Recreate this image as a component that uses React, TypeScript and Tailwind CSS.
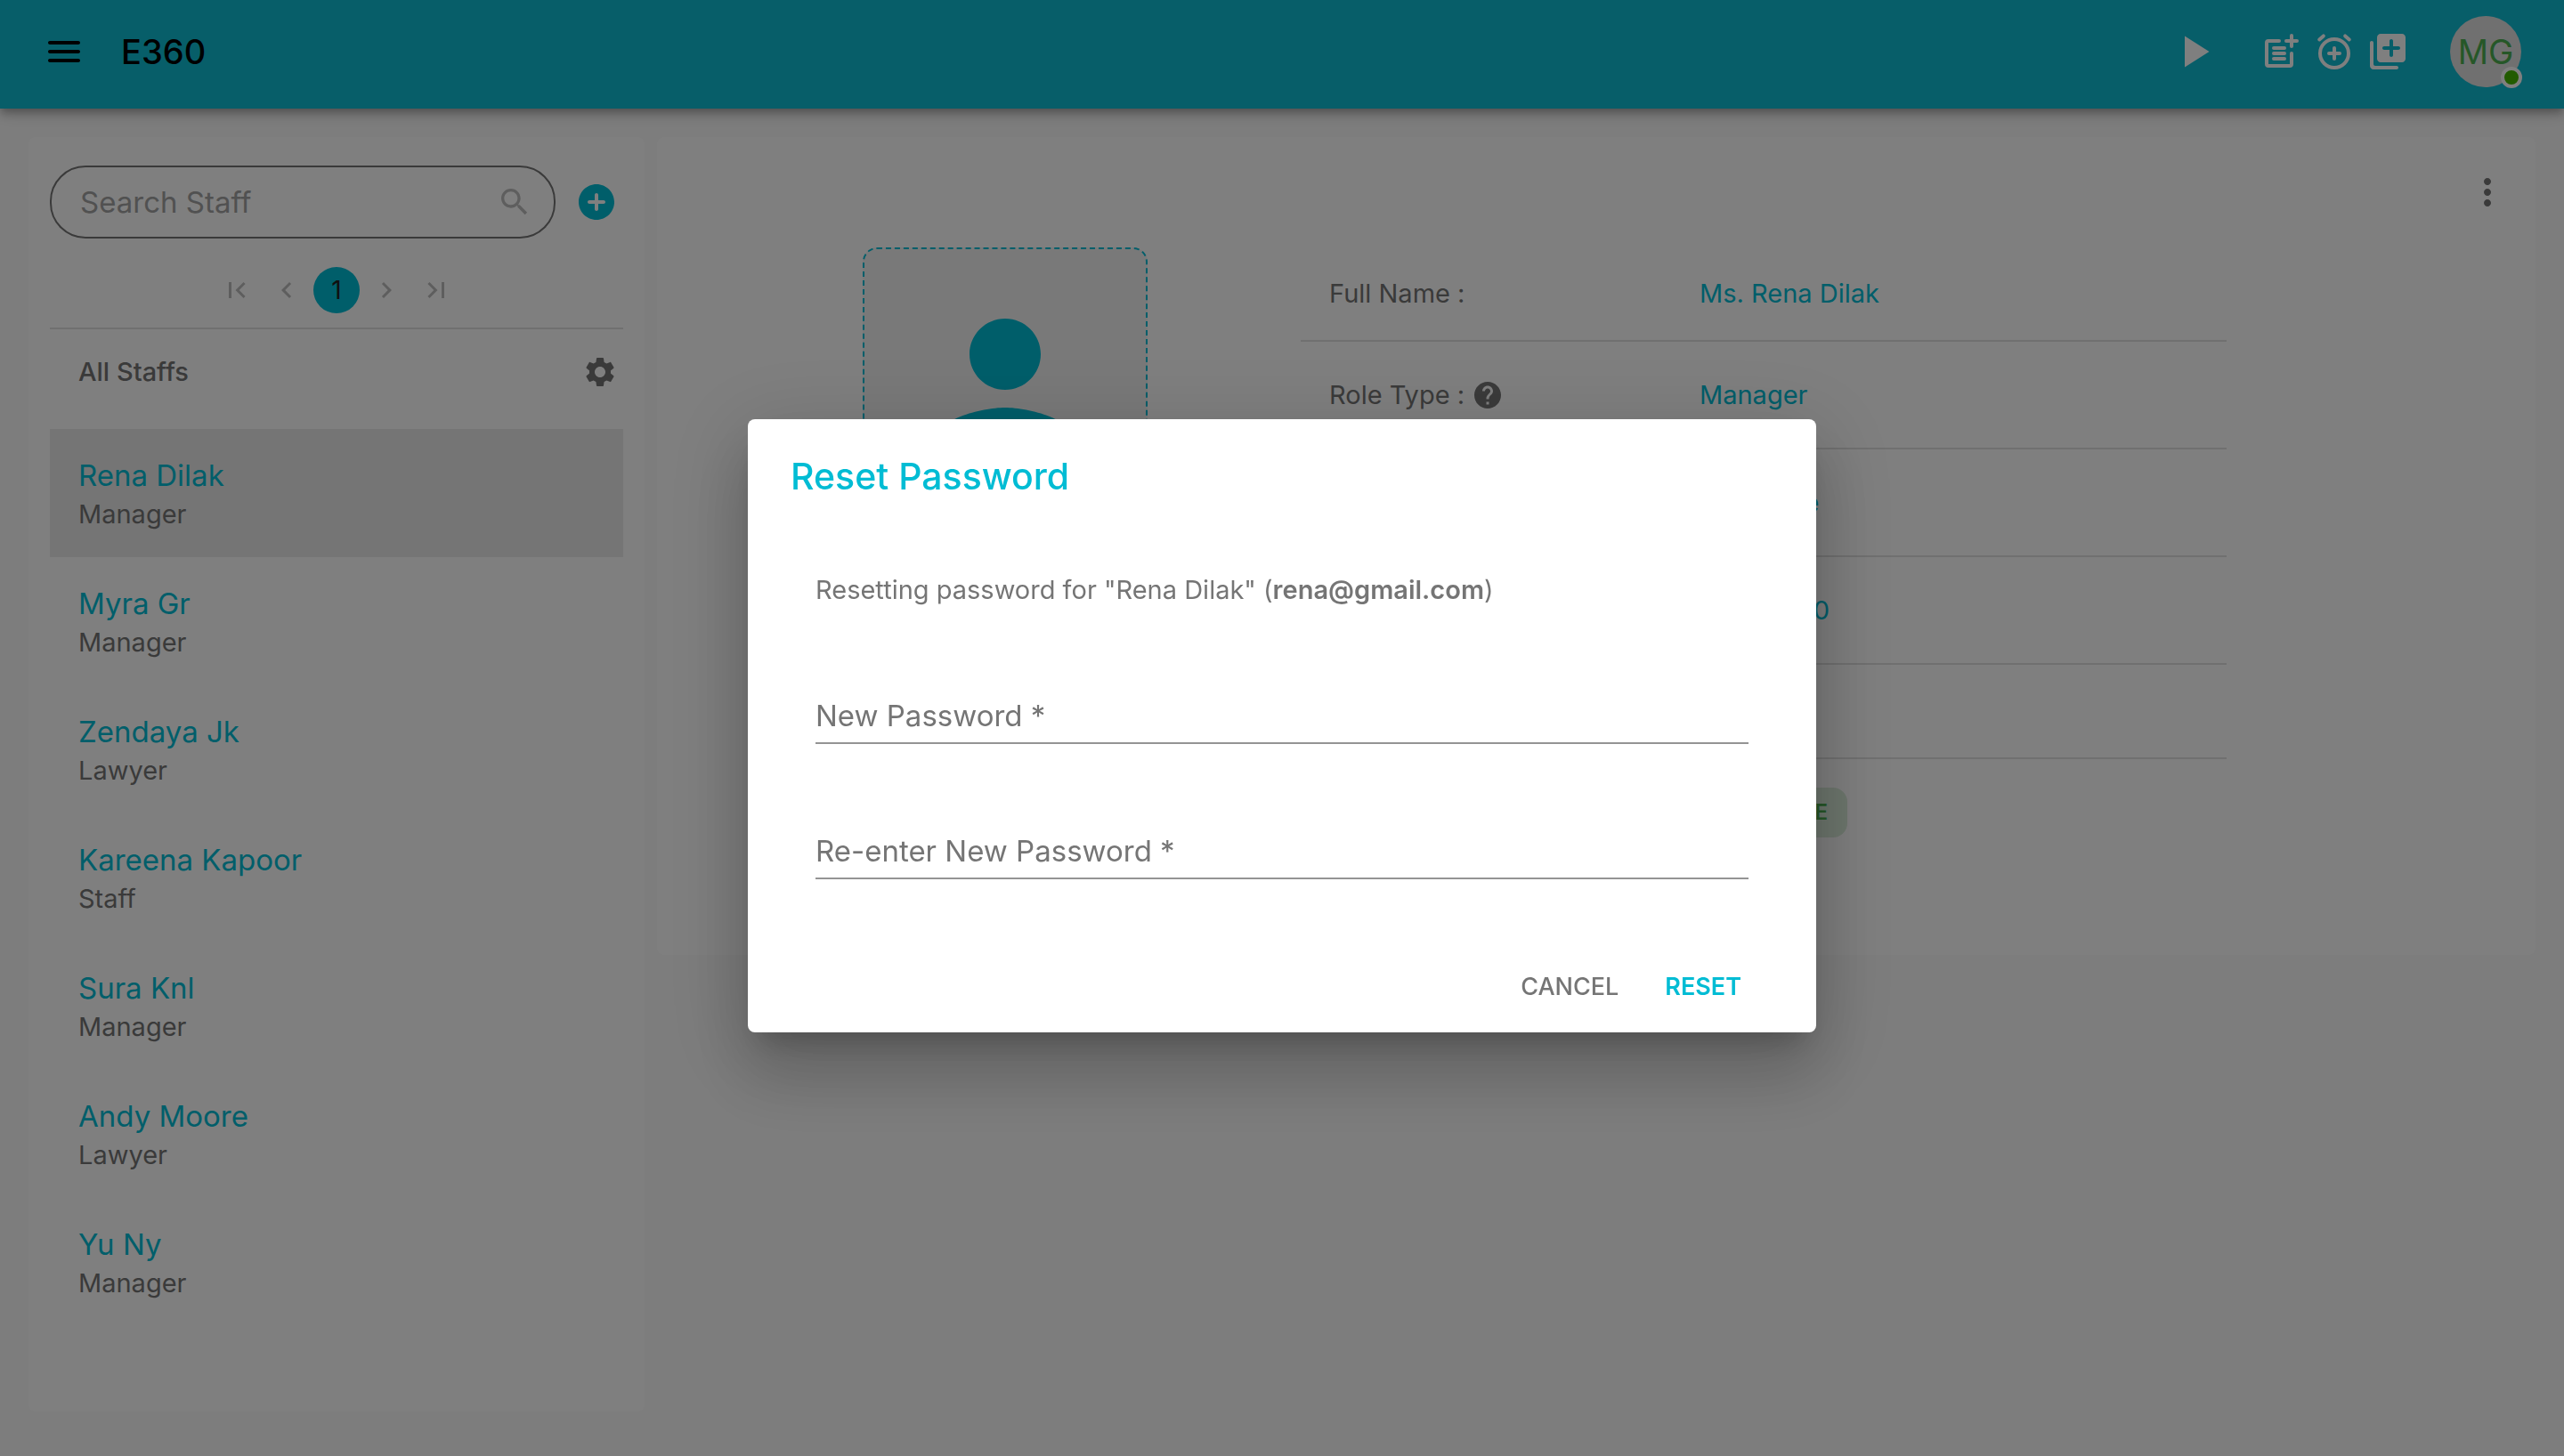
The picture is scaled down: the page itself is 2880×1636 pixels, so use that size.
import type { ReactNode } from "react";

type IconProps = { className: string; children: ReactNode };

function Icon({ className, children }: IconProps) {
  return (
    <svg viewBox="0 0 24 24" fill="currentColor" aria-hidden="true" className={className}>
      {children}
    </svg>
  );
}

const staff = [
  { name: "Rena Dilak", role: "Manager" },
  { name: "Myra Gr", role: "Manager" },
  { name: "Zendaya Jk", role: "Lawyer" },
  { name: "Kareena Kapoor", role: "Staff" },
  { name: "Sura Knl", role: "Manager" },
  { name: "Andy Moore", role: "Lawyer" },
  { name: "Yu Ny", role: "Manager" },
];

function Header() {
  return (
    <header className="relative flex h-[122px] items-center bg-[#0fbcd3] pr-12 pl-12 shadow-[0_4px_8px_-2px_rgba(0,0,0,0.2),0_8px_10px_rgba(0,0,0,0.14),0_2px_20px_rgba(0,0,0,0.12)]">
      <div className="flex flex-1 items-center pb-1.5">
        <button type="button" aria-label="Open menu" className="text-black">
          <Icon className="size-12">
            <path d="M4 18h16c.55 0 1-.45 1-1s-.45-1-1-1H4c-.55 0-1 .45-1 1s.45 1 1 1zm0-5h16c.55 0 1-.45 1-1s-.45-1-1-1H4c-.55 0-1 .45-1 1s.45 1 1 1zM3 7c0 .55.45 1 1 1h16c.55 0 1-.45 1-1s-.45-1-1-1H4c-.55 0-1 .45-1 1z" />
          </Icon>
        </button>
        <h1 className="ml-10 text-[38px] leading-12 font-medium text-black">E360</h1>
        <div className="ml-auto flex items-center text-white">
          <button type="button" aria-label="Start">
            <Icon className="size-[60px]">
              <path d="M8 5v14l11-7z" />
            </Icon>
          </button>
          <div className="ml-11 flex gap-3">
            <button type="button" aria-label="Add note">
              <Icon className="size-12">
                <g fill="none" stroke="currentColor" strokeWidth="2" strokeLinecap="round">
                  <path d="M11 6H5c-.6 0-1 .4-1 1v12c0 .6.4 1 1 1h12c.6 0 1-.4 1-1v-6" />
                  <path d="M18 3v6M15 6h6M8 10h6M8 13h6M8 16h6" />
                </g>
              </Icon>
            </button>
            <button type="button" aria-label="Add reminder">
              <Icon className="size-12">
                <g fill="none" stroke="currentColor" strokeWidth="2" strokeLinecap="round">
                  <circle cx="12" cy="13" r="8" />
                  <path d="M12 10v6M9 13h6M3.6 5.2l2.3-2M20.4 5.2l-2.3-2" />
                </g>
              </Icon>
            </button>
            <button type="button" aria-label="Add to library">
              <Icon className="size-12">
                <path
                  fillRule="evenodd"
                  d="M3 6c-.55 0-1 .45-1 1v13c0 1.1.9 2 2 2h13c.55 0 1-.45 1-1s-.45-1-1-1H5c-.55 0-1-.45-1-1V7c0-.55-.45-1-1-1zm17-4H8c-1.1 0-2 .9-2 2v12c0 1.1.9 2 2 2h12c1.1 0 2-.9 2-2V4c0-1.1-.9-2-2-2zm-2 9h-3v3c0 .55-.45 1-1 1s-1-.45-1-1v-3h-3c-.55 0-1-.45-1-1s.45-1 1-1h3V6c0-.55.45-1 1-1s1 .45 1 1v3h3c.55 0 1 .45 1 1s-.45 1-1 1z"
                />
              </Icon>
            </button>
          </div>
          <button
            type="button"
            aria-label="Account MG"
            className="relative ml-[46px] flex size-20 items-center justify-center rounded-full bg-[#e0e0e0] text-[38px] text-[#4caf50]"
          >
            MG
            <span className="absolute -right-px -bottom-px size-6 rounded-full border-4 border-white bg-[#44b700]" />
          </button>
        </div>
      </div>
    </header>
  );
}

function PageButton({ label, path }: { label: string; path: string }) {
  return (
    <button type="button" aria-label={label} className="flex size-13 items-center justify-center text-[#bdbdbd]">
      <Icon className="size-9">
        <path d={path} />
      </Icon>
    </button>
  );
}

function StaffPanel() {
  return (
    <aside className="w-[692px] shrink-0 rounded-lg bg-white px-6 pt-8 pb-24">
      <div className="flex items-center">
        <div className="flex h-[82px] min-w-0 flex-1 items-center rounded-[40px] border-2 border-[#757575] pr-6 pl-8">
          <input
            type="search"
            aria-label="Search Staff"
            placeholder="Search Staff"
            className="min-w-0 flex-1 bg-transparent text-[33px] leading-10 outline-none placeholder:text-[#a3a3a3]"
          />
          <Icon className="size-10 text-[#bdbdbd]">
            <path d="M15.5 14h-.79l-.28-.27C15.41 12.59 16 11.11 16 9.5 16 5.91 13.09 3 9.5 3S3 5.91 3 9.5 5.91 16 9.5 16c1.61 0 3.09-.59 4.23-1.57l.27.28v.79l5 4.99L20.49 19l-4.99-5zm-6 0C7.01 14 5 11.99 5 9.5S7.01 5 9.5 5 14 7.01 14 9.5 11.99 14 9.5 14z" />
          </Icon>
        </div>
        <button type="button" aria-label="Add staff" className="mr-1.5 ml-[22px] text-[#00bcd4]">
          <Icon className="size-12">
            <path d="M12 2C6.48 2 2 6.48 2 12s4.48 10 10 10 10-4.48 10-10S17.52 2 12 2zm4 11h-3v3c0 .55-.45 1-1 1s-1-.45-1-1v-3H8c-.55 0-1-.45-1-1s.45-1 1-1h3V8c0-.55.45-1 1-1s1 .45 1 1v3h3c.55 0 1 .45 1 1s-.45 1-1 1z" />
          </Icon>
        </button>
      </div>

      <nav aria-label="Pages" className="mt-8 flex justify-center gap-1">
        <PageButton label="First page" path="M18.41 16.59L13.82 12l4.59-4.59L17 6l-6 6 6 6zM6 6h2v12H6z" />
        <PageButton label="Previous page" path="M15.41 7.41L14 6l-6 6 6 6 1.41-1.41L10.83 12z" />
        <button type="button" aria-current="page" className="size-13 rounded-full bg-[#00bcd4] text-[28px] text-[#212121]">
          1
        </button>
        <PageButton label="Next page" path="M10 6L8.59 7.41 13.17 12l-4.58 4.59L10 18l6-6z" />
        <PageButton label="Last page" path="M5.59 7.41L10.18 12l-4.59 4.59L7 18l6-6-6-6zM16 6h2v12h-2z" />
      </nav>

      <div className="mt-4 flex h-[114px] items-center justify-between border-t-2 border-[#e0e0e0] pr-1.5 pb-4 pl-8 text-[#757575]">
        <h2 className="text-[29px] leading-10 font-medium">All Staffs</h2>
        <button type="button" aria-label="Staff settings">
          <Icon className="size-10">
            <path d="M19.14 12.94c.04-.3.06-.61.06-.94 0-.32-.02-.64-.07-.94l2.03-1.58c.18-.14.23-.41.12-.61l-1.92-3.32c-.12-.22-.37-.29-.59-.22l-2.39.96c-.5-.38-1.03-.7-1.62-.94l-.36-2.54c-.04-.24-.24-.41-.48-.41h-3.84c-.24 0-.43.17-.47.41l-.36 2.54c-.59.24-1.13.57-1.62.94l-2.39-.96c-.22-.08-.47 0-.59.22L2.74 8.87c-.12.21-.08.47.12.61l2.03 1.58c-.05.3-.09.63-.09.94s.02.64.07.94l-2.03 1.58c-.18.14-.23.41-.12.61l1.92 3.32c.12.22.37.29.59.22l2.39-.96c.5.38 1.03.7 1.62.94l.36 2.54c.05.24.24.41.48.41h3.84c.24 0 .44-.17.47-.41l.36-2.54c.59-.24 1.13-.56 1.62-.94l2.39.96c.22.08.47 0 .59-.22l1.92-3.32c.12-.22.07-.47-.12-.61l-2.01-1.58zM12 15.6c-1.98 0-3.6-1.62-3.6-3.6s1.62-3.6 3.6-3.6 3.6 1.62 3.6 3.6-1.62 3.6-3.6 3.6z" />
          </Icon>
        </button>
      </div>

      <ul>
        {staff.map((person, index) => (
          <li key={person.name}>
            <button
              type="button"
              className={
                index === 0
                  ? "flex h-36 w-full flex-col justify-center bg-[#ebebeb] px-8 text-left"
                  : "flex h-36 w-full flex-col justify-center px-8 text-left"
              }
            >
              <span className="text-[33px] leading-12 text-[#00bcd4]">{person.name}</span>
              <span className="text-[29px] leading-10 text-[#757575]">{person.role}</span>
            </button>
          </li>
        ))}
      </ul>
    </aside>
  );
}

function DetailRow({ label, tall, children }: { label?: ReactNode; tall?: boolean; children?: ReactNode }) {
  return (
    <div
      className={
        tall
          ? "flex h-[121px] items-center border-b-2 border-[#e0e0e0] pl-8"
          : "flex h-[106px] items-center border-b-2 border-[#e0e0e0] pl-8"
      }
    >
      <dt className="flex w-[416px] shrink-0 items-center gap-2 text-[#757575]">{label}</dt>
      <dd className="text-[#00bcd4]">{children}</dd>
    </div>
  );
}

function DetailPanel() {
  return (
    <main className="min-w-0 flex-1 rounded-lg bg-white pt-[38px] pb-25">
      <div className="flex justify-end pr-[30px]">
        <button type="button" aria-label="More actions" className="text-[#757575]">
          <Icon className="size-12">
            <path d="M12 8c1.1 0 2-.9 2-2s-.9-2-2-2-2 .9-2 2 .9 2 2 2zm0 2c-1.1 0-2 .9-2 2s.9 2 2 2 2-.9 2-2-.9-2-2-2zm0 6c-1.1 0-2 .9-2 2s.9 2 2 2 2-.9 2-2-.9-2-2-2z" />
          </Icon>
        </button>
      </div>
      <div className="mt-[38px] flex items-start pr-8 pl-[231px]">
        <div className="flex size-80 shrink-0 items-center justify-center rounded-2xl border-2 border-dashed border-[#00bcd4] bg-[#f3f3f3] text-[#00bcd4]">
          <Icon className="size-60">
            <path d="M12 12c2.21 0 4-1.79 4-4s-1.79-4-4-4-4 1.79-4 4 1.79 4 4 4zm0 2c-2.67 0-8 1.34-8 4v2h16v-2c0-2.66-5.33-4-8-4z" />
          </Icon>
        </div>
        <dl className="ml-[172px] max-w-[1040px] flex-1 text-[29px] leading-10">
          <DetailRow label="Full Name :">Ms. Rena Dilak</DetailRow>
          <DetailRow
            tall
            label={
              <>
                Role Type :
                <Icon className="size-9">
                  <path d="M12 2C6.48 2 2 6.48 2 12s4.48 10 10 10 10-4.48 10-10S17.52 2 12 2zm1 17h-2v-2h2v2zm2.07-7.75l-.9.92C13.45 12.9 13 13.5 13 15h-2v-.5c0-1.1.45-2.1 1.17-2.83l1.24-1.26c.37-.36.59-.86.59-1.41 0-1.1-.9-2-2-2s-2 .9-2 2H8c0-2.21 1.79-4 4-4s4 1.79 4 4c0 .88-.36 1.68-.93 2.25z" />
                </Icon>
              </>
            }
          >
            Manager
          </DetailRow>
          <DetailRow tall>Part-Time</DetailRow>
          <DetailRow tall>90000000</DetailRow>
          <DetailRow />
          <div className="flex h-[120px] items-center pl-8">
            <dt className="w-[416px] shrink-0" />
            <dd className="flex h-14 w-[166px] items-center justify-end rounded-2xl bg-[#dbeddb] pr-[22px] text-[24px] font-semibold text-[#4caf50]">
              ACTIVE
            </dd>
          </div>
        </dl>
      </div>
    </main>
  );
}

function PasswordField({ label }: { label: string }) {
  return (
    <input
      type="password"
      required
      aria-label={label}
      placeholder={label + " *"}
      className="block h-[66px] w-full border-b-2 border-[#949494] bg-transparent pt-1 text-[33px] leading-10 outline-none placeholder:text-[#757575]"
    />
  );
}

function ResetPasswordDialog() {
  return (
    <div className="fixed inset-0 flex items-center justify-center bg-black/50 pb-1.5">
      <form
        role="dialog"
        aria-modal="true"
        aria-labelledby="reset-title"
        className="w-[1200px] rounded-lg bg-white px-12 pt-10 pb-3 shadow-[0_22px_30px_-14px_rgba(0,0,0,0.2),0_48px_76px_6px_rgba(0,0,0,0.14),0_18px_92px_16px_rgba(0,0,0,0.12)]"
      >
        <h2 id="reset-title" className="text-[41px] leading-12 font-medium text-[#00bcd4]">
          Reset Password
        </h2>
        <div className="pt-[84px] pr-7 pl-7">
          <p className="text-[29px] leading-10 text-[#757575]">
            Resetting password for "Rena Dilak" (<b className="font-semibold">rena@gmail.com</b>)
          </p>
          <div className="mt-[87px] flex flex-col gap-[86px]">
            <PasswordField label="New Password" />
            <PasswordField label="Re-enter New Password" />
          </div>
        </div>
        <div className="mt-[82px] flex justify-end gap-3 pr-4 text-[27px] leading-10 font-medium">
          <button type="button" className="h-[78px] px-5 text-[#757575]">
            CANCEL
          </button>
          <button type="submit" className="h-[78px] px-5 font-semibold text-[#00bcd4]">
            RESET
          </button>
        </div>
      </form>
    </div>
  );
}

export default function App() {
  return (
    <div className="min-h-screen bg-[#fafafa] font-['Inter',sans-serif]">
      <Header />
      <div className="flex items-start gap-3.5 px-8 pt-8 pb-12">
        <StaffPanel />
        <DetailPanel />
      </div>
      <ResetPasswordDialog />
    </div>
  );
}
